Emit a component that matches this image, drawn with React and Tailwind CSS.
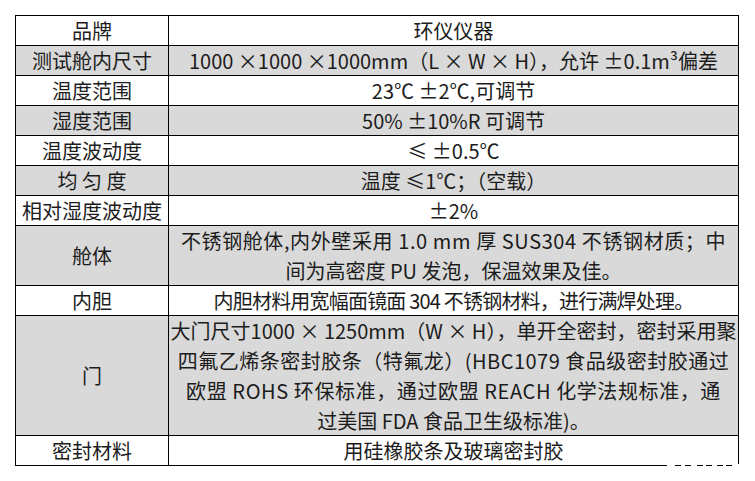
import React from 'react'

const rows = [
  { label: '品牌', lines: ['环仪仪器'] },
  { label: '测试舱内尺寸', lines: ['1000 ×1000  ×1000mm（L × W × H），允许 ±0.1m³偏差'] },
  { label: '温度范围', lines: ['23℃ ±2℃,可调节'] },
  { label: '湿度范围', lines: ['50% ±10%R  可调节'] },
  { label: '温度波动度', lines: ['≤ ±0.5℃'] },
  { label: '均 匀 度', lines: ['温度 ≤1℃；（空载）'] },
  { label: '相对湿度波动度', lines: ['±2%'] },
  {
    label: '舱体',
    lines: [
      ['不锈钢舱体,内外壁采用 1.0 mm 厚 SUS304 不锈钢材质；中', 'tracking-[0.6px]'],
      '间为高密度 PU 发泡，保温效果及佳。',
    ],
  },
  { label: '内胆', lines: [['内胆材料用宽幅面镜面 304 不锈钢材料，进行满焊处理。', 'tracking-[-0.8px]']] },
  {
    label: '门',
    lines: [
      '大门尺寸1000 × 1250mm（W × H），单开全密封，密封采用聚',
      ['四氟乙烯条密封胶条（特氟龙）(HBC1079 食品级密封胶通过', 'tracking-[0.5px]'],
      ['欧盟 ROHS 环保标准，通过欧盟 REACH 化学法规标准，通', 'tracking-[0.6px]'],
      '过美国 FDA 食品卫生级标准)。',
    ],
  },
  { label: '密封材料', lines: ['用硅橡胶条及玻璃密封胶'] },
]

const heights = { 1: 'h-[29px]', 2: 'h-[59px]', 4: 'h-[119px]' }

export default function App() {
  return (
    <div
      className="w-[755px] h-[481px] bg-white pt-[15px] pl-[15px] text-[#1c1c1c] text-[20px]"
      style={{ fontFamily: '"Noto Sans CJK SC", "Noto Sans", sans-serif' }}
    >
      <div className="w-[724px] border border-black relative">
        {rows.map((r, i) => (
          <div
            key={i}
            className={`flex box-content ${heights[r.lines.length]} ${i > 0 ? 'border-t border-black' : ''} ${i % 2 === 1 ? 'bg-[#d9d9d9]' : 'bg-white'}`}
          >
            <div className="w-[153px] shrink-0 border-r border-black flex items-center justify-center whitespace-nowrap">
              {r.label}
            </div>
            <div className="flex-1 flex flex-col items-center justify-center whitespace-nowrap">
              {r.lines.map((l, j) => {
                const [text, cls] = Array.isArray(l) ? l : [l, '']
                return (
                  <div key={j} className={`leading-[30px] ${cls}`}>
                    {text}
                  </div>
                )
              })}
            </div>
          </div>
        ))}
        <div className="absolute right-[-2px] bottom-[-1px] w-[90px] h-[2px] flex gap-[6px] justify-end">
          <span className="w-[8px] bg-white" />
          <span className="w-[4px] bg-white" />
          <span className="w-[6px] bg-white" />
          <span className="w-[3px] bg-white" />
          <span className="w-[5px] bg-white" />
          <span className="w-[3px] bg-white" />
          <span className="w-[8px] bg-white" />
        </div>
      </div>
    </div>
  )
}
